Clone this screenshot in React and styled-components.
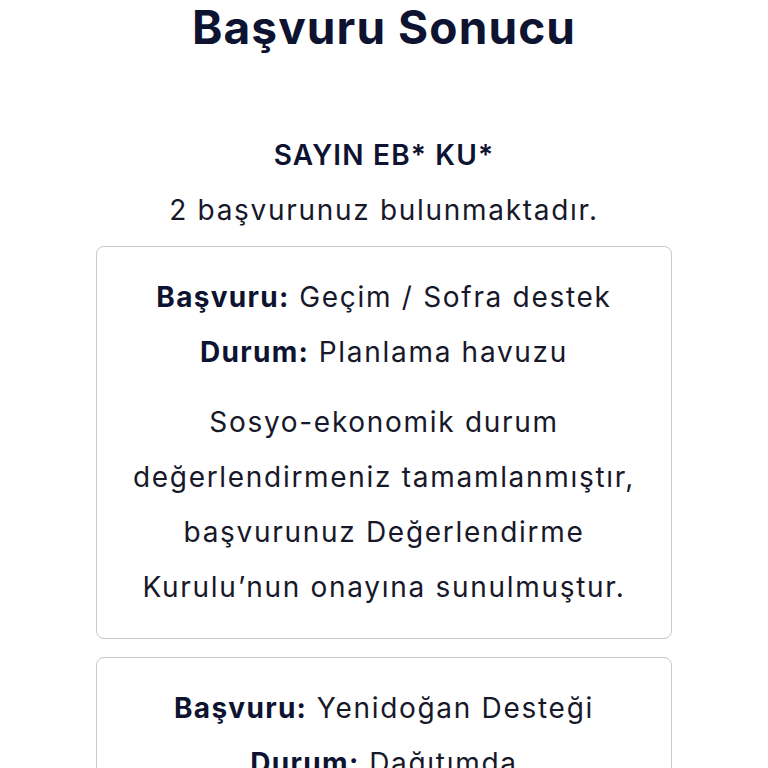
import React from "react";
import styled, { createGlobalStyle } from "styled-components";

const Global = createGlobalStyle`
  html, body { margin: 0; padding: 0; background: #ffffff; }
  body { font-family: "Inter", "Noto Sans", sans-serif; color: #0e1430; }
`;

const Page = styled.div`
  display: flex;
  flex-direction: column;
  align-items: center;
  padding-top: 0;
`;

const Title = styled.h1`
  margin: 0 0 73px;
  font-size: 46px;
  line-height: 55px;
  font-weight: 700;
  color: #0d1331;
  letter-spacing: 1.1px;
`;

const Text = styled.div`
  font-size: 28px;
  line-height: 55px;
  letter-spacing: 1.7px;
  color: #17182a;
`;

const Greeting = styled(Text)`
  font-weight: 600;
  color: #0d1331;
  letter-spacing: 1.2px;
`;

const Count = styled(Text)`
  margin-bottom: 8px;
`;

const Card = styled.div`
  box-sizing: border-box;
  width: 576px;
  border: 1px solid #c9c9cc;
  border-radius: 8px;
  padding: 23px 8px 23px;
  margin-bottom: 18px;
  text-align: center;
`;

const Label = styled.span`
  font-weight: 700;
  color: #0d1331;
  letter-spacing: 1.3px;
`;

const Note = styled(Text)`
  margin-top: 15px;
`;

const apps = [
  {
    type: "Geçim / Sofra destek",
    status: "Planlama havuzu",
    note: [
      "Sosyo-ekonomik durum",
      "değerlendirmeniz tamamlanmıştır,",
      "başvurunuz Değerlendirme",
      "Kurulu’nun onayına sunulmuştur.",
    ],
  },
  { type: "Yenidoğan Desteği", status: "Dağıtımda", note: [] },
];

export default function App() {
  return (
    <>
      <Global />
      <Page>
        <Title>Başvuru Sonucu</Title>
        <Greeting>SAYIN EB* KU*</Greeting>
        <Count>2 başvurunuz bulunmaktadır.</Count>
        {apps.map((a) => (
          <Card key={a.type}>
            <Text>
              <Label>Başvuru:</Label> {a.type}
            </Text>
            <Text>
              <Label>Durum:</Label> {a.status}
            </Text>
            {a.note.length > 0 && (
              <Note>
                {a.note.map((l, i) => (
                  <React.Fragment key={i}>
                    {l}
                    {i < a.note.length - 1 && <br />}
                  </React.Fragment>
                ))}
              </Note>
            )}
          </Card>
        ))}
      </Page>
    </>
  );
}
